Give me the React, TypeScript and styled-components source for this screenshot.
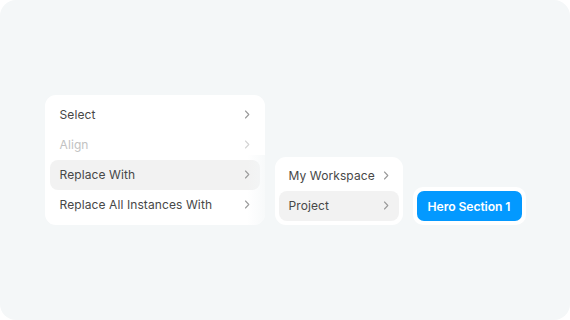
import React from "react";
import styled, { createGlobalStyle } from "styled-components";

const Global = createGlobalStyle`
  html, body { margin: 0; padding: 0; background: #ffffff; }
  body { font-family: Inter, "Noto Sans", sans-serif; -webkit-font-smoothing: antialiased; }
`;

const Canvas = styled.div`
  width: 570px;
  height: 320px;
  box-sizing: border-box;
  background: #f4f7f8;
  border-radius: 16px;
  display: flex;
  align-items: flex-end;
  justify-content: center;
  padding-bottom: 95px;
  gap: 10px;
`;

const Menu = styled.div<{ $width: number; $pad: number }>`
  position: relative;
  width: ${(p) => p.$width}px;
  box-sizing: border-box;
  padding: ${(p) => p.$pad}px;
  background: #ffffff;
  border-radius: 11px;
  display: flex;
  flex-direction: column;
`;

const Fade = styled.div`
  position: absolute;
  right: 0;
  top: 60px;
  bottom: 0;
  width: 18px;
  border-radius: 0 0 11px 0;
  background: linear-gradient(to right, rgba(244, 247, 248, 0), rgba(244, 247, 248, 0.7));
  pointer-events: none;
`;

const Row = styled.div<{ $active?: boolean; $disabled?: boolean }>`
  height: 30px;
  box-sizing: border-box;
  display: flex;
  align-items: center;
  justify-content: space-between;
  padding: 0 10px 1px;
  border-radius: 8px;
  background: ${(p) => (p.$active ? "#f2f2f2" : "transparent")};
  color: ${(p) => (p.$disabled ? "#c2c2c2" : "#474747")};
  font-size: 12px;
  letter-spacing: 0.1px;
`;

const Chevron = styled.svg<{ $disabled?: boolean }>`
  width: 6px;
  height: 9px;
  color: ${(p) => (p.$disabled ? "#d4d4d4" : "#9a9a9a")};
  flex: none;
`;

const ButtonRing = styled.div`
  background: #ffffff;
  padding: 4px;
  border-radius: 10px;
  display: flex;
`;

const HeroButton = styled.div`
  height: 30px;
  width: 105px;
  box-sizing: border-box;
  border-radius: 7px;
  background: #0399ff;
  color: #ffffff;
  font-size: 12.2px;
  font-weight: 600;
  display: flex;
  align-items: center;
  justify-content: center;
  letter-spacing: -0.1px;
`;

const Arrow: React.FC<{ disabled?: boolean }> = ({ disabled }) => (
  <Chevron $disabled={disabled} viewBox="0 0 6 9" fill="none">
    <path d="M1.5 1 L4.8 4.5 L1.5 8" stroke="currentColor" strokeWidth="1.1" strokeLinecap="round" strokeLinejoin="round" />
  </Chevron>
);

const Item: React.FC<{ label: string; active?: boolean; disabled?: boolean }> = ({ label, active, disabled }) => (
  <Row $active={active} $disabled={disabled}>
    <span>{label}</span>
    <Arrow disabled={disabled} />
  </Row>
);

export default function App() {
  return (
    <>
      <Global />
      <Canvas>
        <Menu $width={220} $pad={5}>
          <Item label="Select" />
          <Item label="Align" disabled />
          <Item label="Replace With" active />
          <Item label="Replace All Instances With" />
          <Fade />
        </Menu>
        <Menu $width={128} $pad={4}>
          <Item label="My Workspace" />
          <Item label="Project" active />
        </Menu>
        <ButtonRing>
          <HeroButton>Hero Section 1</HeroButton>
        </ButtonRing>
      </Canvas>
    </>
  );
}
